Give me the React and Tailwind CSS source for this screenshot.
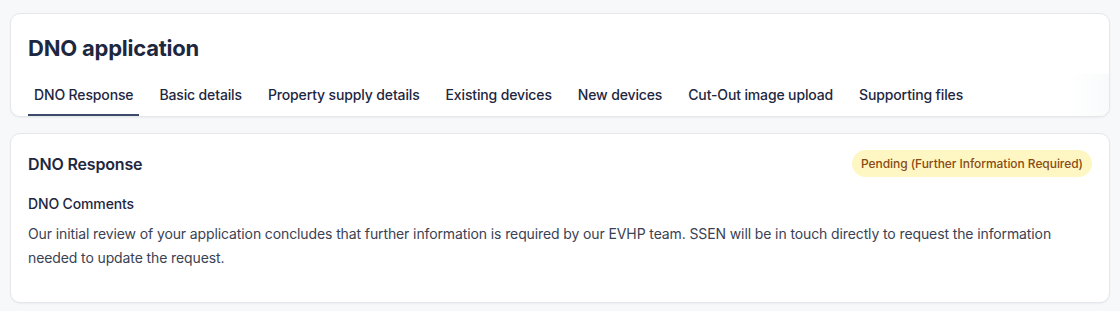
const tabs = [
  'DNO Response',
  'Basic details',
  'Property supply details',
  'Existing devices',
  'New devices',
  'Cut-Out image upload',
  'Supporting files',
];

export default function App() {
  return (
    <div
      className="min-h-[311px] bg-[#f7f8fa] px-[10px] pt-[13px] text-[#1e2740]"
      style={{ fontFamily: 'Inter, "Noto Sans", sans-serif' }}
    >
      {/* Header card with tabs */}
      <div className="relative overflow-hidden rounded-[10px] border border-[#e5e7eb] bg-white px-[17px] shadow-[0_1px_2px_rgba(16,24,40,0.05)]">
        <h1 className="pt-[20px] text-[22px] font-bold leading-[28px] tracking-[-0.01em]">
          DNO application
        </h1>
        <div className="mt-[22px] flex gap-[14px]">
          {tabs.map((t, i) => (
            <button
              key={t}
              type="button"
              className={
                'border-b-2 px-1.5 pb-[9px] pt-[1px] text-[14px] font-medium leading-[20px] tracking-[-0.01em] ' +
                (i === 0 ? 'border-[#3b4a6b]' : 'border-transparent')
              }
            >
              {t}
            </button>
          ))}
        </div>
        <div className="pointer-events-none absolute right-0 top-[60px] h-[56px] w-[40px] bg-gradient-to-l from-[#f9fafb] to-transparent" />
      </div>

      {/* DNO response card */}
      <div className="mt-[16px] rounded-[10px] border border-[#e5e7eb] bg-white px-[17px] pb-[32px] pt-[16px] shadow-[0_1px_2px_rgba(16,24,40,0.05)]">
        <div className="flex items-center justify-between">
          <h2 className="text-[16px] font-semibold leading-[24px] tracking-[-0.01em]">DNO Response</h2>
          <span className="rounded-full bg-[#fef7c3] px-[9px] py-[5px] text-[12px] font-medium leading-[17px] tracking-[-0.005em] text-[#8a4b14]">
            Pending (Further Information Required)
          </span>
        </div>
        <h3 className="mt-[17px] text-[14px] font-medium leading-[20px] tracking-[-0.01em]">DNO Comments</h3>
        <p className="mt-[8px] text-[14px] leading-[24px] tracking-[-0.008em] text-[#3a4254]">
          Our initial review of your application concludes that further information is required by our EVHP team. SSEN will be in touch directly to request the information needed to update the request.
        </p>
      </div>
    </div>
  );
}
